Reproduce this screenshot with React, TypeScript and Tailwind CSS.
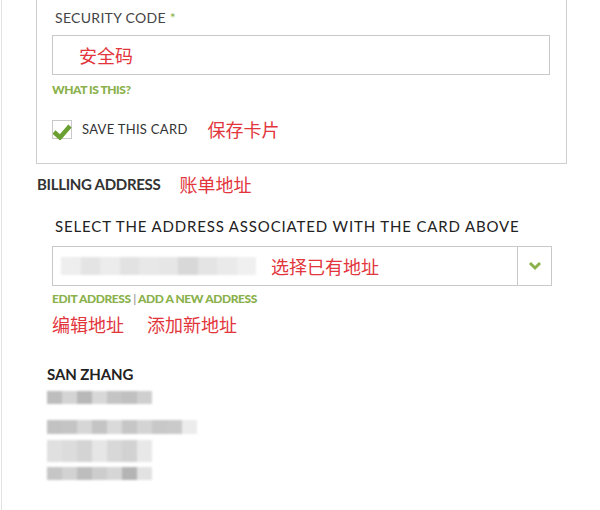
import React from "react";

const cjk = { fontFamily: '"Noto Sans CJK SC", "Noto Sans", sans-serif' };
const latin = { fontFamily: 'Lato, "Noto Sans", sans-serif' };

function Blur({ w, h, shades }: { w: number; h: number; shades: string[] }) {
  return (
    <div className="flex blur-[1px]" style={{ width: w, height: h }}>
      {shades.map((s, i) => (
        <div key={i} className="flex-1 h-full" style={{ background: s }} />
      ))}
    </div>
  );
}

export default function App() {
  return (
    <div className="w-[600px] h-[510px] bg-white overflow-hidden" style={latin}>
      <div className="ml-[1px] h-full border-l border-[#e2e2e2]">
        {/* Card */}
        <div className="ml-[34px] w-[531px] h-[164px] border-l border-r border-b border-[#cfcfcf] pl-[15px] pr-[16px] pt-[9px]">
          <div className="pl-[3px] text-[14px] leading-[18px] text-[#444] tracking-[0.3px]">
            SECURITY CODE <span className="text-[#8ab14b]">*</span>
          </div>
          <div className="mt-[8px] h-[40px] border border-[#c9c9c9] flex items-center pl-[26px]">
            <span className="text-[18px] text-[#e2353c]" style={cjk}>安全码</span>
          </div>
          <div className="mt-[8px] text-[12px] leading-[14px] font-black text-[#8ab14b] tracking-[-0.45px]">
            WHAT IS THIS?
          </div>
          <div className="mt-[19px] flex items-center">
            <div className="w-[20px] h-[19px] border border-[#c9c9c9] relative">
              <svg className="absolute left-[0px] top-[3px]" width="19" height="16" viewBox="0 0 19 16">
                <polyline points="1,8 7,13.5 17,2" fill="none" stroke="#6aa032" strokeWidth="4.5" strokeLinejoin="miter" />
              </svg>
            </div>
            <span className="ml-[10px] text-[13px] text-[#333] tracking-[0.3px]">SAVE THIS CARD</span>
            <span className="ml-[20px] text-[18px] text-[#e2353c]" style={cjk}>保存卡片</span>
          </div>
        </div>

        {/* Billing */}
        <div className="ml-[35px] mt-[7px] flex items-center">
          <span className="text-[15px] font-bold text-[#333] tracking-[-0.3px]">BILLING ADDRESS</span>
          <span className="ml-[19px] text-[18px] text-[#e2353c]" style={cjk}>账单地址</span>
        </div>

        <div className="ml-[50px] w-[500px]">
          <div className="mt-[19px] pl-[3px] text-[15px] leading-[18px] text-[#222] tracking-[0.85px]">
            SELECT THE ADDRESS ASSOCIATED WITH THE CARD ABOVE
          </div>
          <div className="mt-[11px] h-[40px] border border-[#c9c9c9] flex">
            <div className="flex-1 flex items-center pl-[8px]">
              <Blur w={195} h={18} shades={["#eee", "#e4e4e4", "#ececec", "#e2e2e2", "#e8e8e8", "#e6e6e6", "#d8d8d8", "#e4e4e4", "#eaeaea", "#f0f0f0"]} />
              <span className="ml-[15px] text-[18px] text-[#e2353c]" style={cjk}>选择已有地址</span>
            </div>
            <div className="w-[34px] border-l border-[#c9c9c9] flex items-center justify-center">
              <svg width="14" height="10" viewBox="0 0 14 10">
                <polyline points="2,2 7,7 12,2" fill="none" stroke="#8ab14b" strokeWidth="3" />
              </svg>
            </div>
          </div>
          <div className="mt-[6px] text-[12px] leading-[14px] font-black text-[#8ab14b] tracking-[-0.4px]">
            EDIT ADDRESS <span className="text-[#888] font-normal">|</span> ADD A NEW ADDRESS
          </div>
          <div className="mt-[5px] flex text-[18px] text-[#e2353c]" style={cjk}>
            <span>编辑地址</span>
            <span className="ml-[23px]">添加新地址</span>
          </div>
        </div>

        <div className="ml-[45px] mt-[25px]">
          <div className="text-[15px] font-bold text-[#222] tracking-[-0.1px]">SAN ZHANG</div>
          <div className="mt-[5px]">
            <Blur w={105} h={13} shades={["#bdbdbd", "#d4d4d4", "#b8b8b8", "#d8d8d8", "#c4c4c4", "#c0c0c0", "#cfcfcf"]} />
          </div>
          <div className="mt-[16px]">
            <Blur w={150} h={14} shades={["#c2c2c2", "#c4c4c4", "#d6d6d6", "#c4c4c4", "#dadada", "#c6c6c6", "#d4d4d4", "#c8c8c8", "#cacaca", "#ececec"]} />
          </div>
          <div className="mt-[6px]">
            <Blur w={105} h={22} shades={["#e0e0e0", "#dcdcdc", "#d4d4d4", "#e6e6e6", "#d8d8d8", "#d2d2d2", "#e8e8e8"]} />
          </div>
          <div className="mt-[5px]">
            <Blur w={105} h={13} shades={["#c6c6c6", "#d2d2d2", "#bdbdbd", "#cdcdcd", "#d6d6d6", "#b4b4b4", "#e2e2e2"]} />
          </div>
        </div>
      </div>
    </div>
  );
}
